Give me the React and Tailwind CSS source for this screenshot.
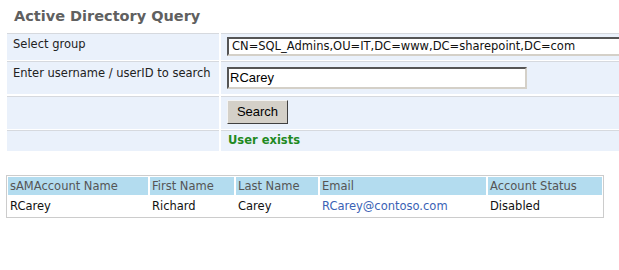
export default function App() {
  const v = { fontFamily: '"DejaVu Sans", Verdana, sans-serif' };
  const a = { fontFamily: '"Liberation Sans", Arial, sans-serif' };
  const cell = "bg-[#eaf1fb] border-t border-[#d6d9de]";
  return (
    <div className="w-[619px] h-[270px] overflow-hidden bg-white relative" style={v}>
      <div className="pl-[14px] pt-[7px] h-[33px] text-[14.5px] leading-[18px] font-bold text-[#606060]">
        Active Directory Query
      </div>
      <div className="ml-[7px] w-[660px] grid grid-cols-[212px_1fr] gap-x-[2px] text-[11.5px] text-[#222]">
        <div className={`${cell} h-[27px] pl-[6px] pt-[4px] leading-[13px]`}>Select group</div>
        <div className={`${cell} h-[27px] pl-[6px] pt-[3px]`}>
          <div className="h-[19px] bg-white border-2 border-t-[#555] border-l-[#555] border-b-[#d4d0c8] border-r-[#d4d0c8] pl-[3px] text-[11.5px] leading-[15px] text-[#111] whitespace-nowrap">
            CN=SQL_Admins,OU=IT,DC=www,DC=sharepoint,DC=com
          </div>
        </div>
        <div className="col-span-2 h-[1px]" />
        <div className={`${cell} h-[33px] pl-[6px] pt-[5px] leading-[13px]`}>Enter username / userID to search</div>
        <div className={`${cell} h-[33px] pl-[6px] pt-[5px]`}>
          <div className="w-[300px] h-[22px] bg-white border-2 border-t-[#555] border-l-[#555] border-b-[#d4d0c8] border-r-[#d4d0c8] pl-[1px] text-[13px] leading-[18px] text-black" style={a}>
            RCarey
          </div>
        </div>
        <div className="col-span-2 h-[2px]" />
        <div className={`${cell} h-[33px]`} />
        <div className={`${cell} h-[33px] pl-[6px] pt-[3px]`}>
          <div className="w-[61px] h-[24px] bg-[#d4d0c8] border border-t-[#f4f4f4] border-l-[#f4f4f4] border-b-[#404040] border-r-[#404040] flex items-center justify-center text-[13px] text-black" style={a}>
            Search
          </div>
        </div>
        <div className="col-span-2 h-[1px]" />
        <div className={`${cell} h-[21px]`} />
        <div className={`${cell} h-[21px] pl-[7px] pt-[3px] leading-[13px] font-bold text-[#1f8a1f]`}>User exists</div>
      </div>
      <div className="mt-[24px] ml-[6px] w-[598px] border border-[#cccccc] p-[1px] text-[11.5px] leading-[13px]">
        <div className="grid grid-cols-[140px_84px_82px_166px_1fr] gap-x-[2px]">
          {["sAMAccount Name", "First Name", "Last Name", "Email", "Account Status"].map((h) => (
            <div key={h} className="bg-[#b3dcef] h-[18px] pl-[2px] pt-[3px] text-[#555]">{h}</div>
          ))}
          <div className="h-[21px] pl-[2px] pt-[5px] text-[#111]">RCarey</div>
          <div className="h-[21px] pl-[2px] pt-[5px] text-[#111]">Richard</div>
          <div className="h-[21px] pl-[2px] pt-[5px] text-[#111]">Carey</div>
          <div className="h-[21px] pl-[2px] pt-[5px] text-[#3a62b5]">RCarey@contoso.com</div>
          <div className="h-[21px] pl-[2px] pt-[5px] text-[#111]">Disabled</div>
        </div>
      </div>
    </div>
  );
}
